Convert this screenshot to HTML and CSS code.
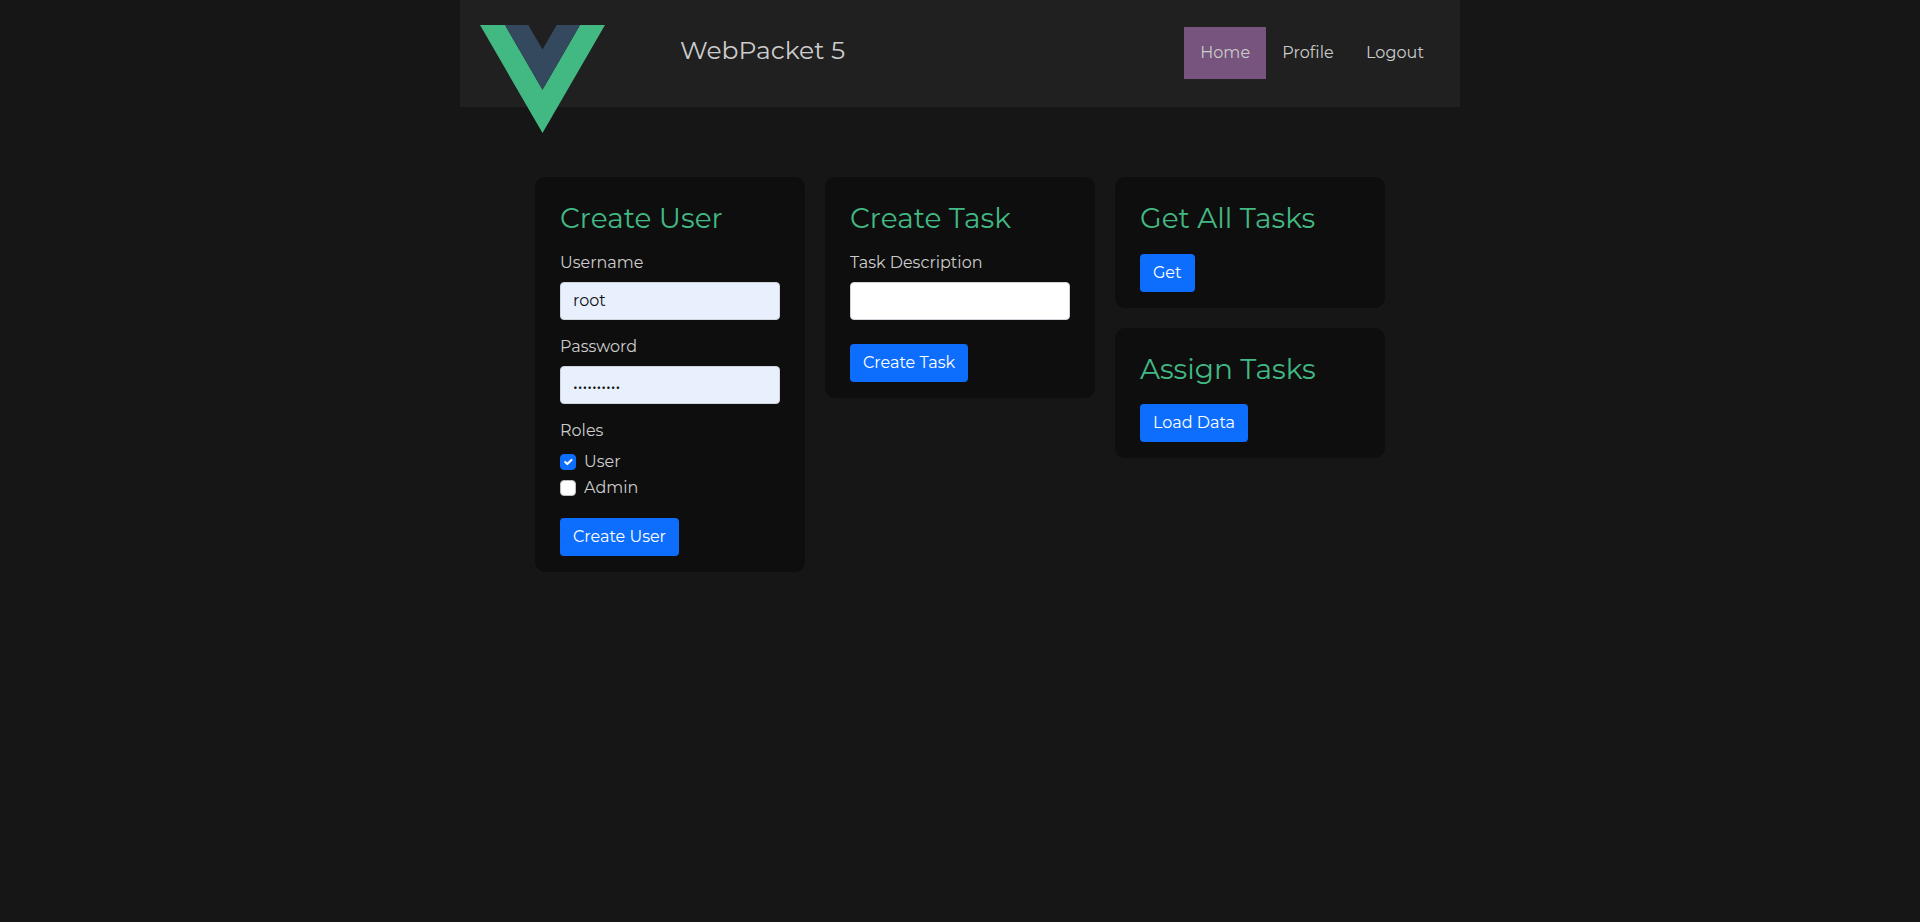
FILE: index.html
```html
<!DOCTYPE html>
<html lang="en">
<head>
<meta charset="utf-8">
<title>WebPacket 5</title>
<link rel="stylesheet" href="styles.css">
</head>
<body>
<header class="header">
  <svg class="logo" viewBox="0 0 125 108" aria-hidden="true">
    <path fill="#42b883" d="M0 0H25L62.5 64.8L100 0H125L62.5 108Z"/>
    <path fill="#35495e" d="M25 0H48.3L62.5 24.5L76.7 0H100L62.5 64.8Z"/>
  </svg>
  <div class="brand">WebPacket 5</div>
  <nav class="nav">
    <a class="nav-link active">Home</a>
    <a class="nav-link">Profile</a>
    <a class="nav-link">Logout</a>
  </nav>
</header>
<main class="board">
  <section class="card">
    <h3 class="title">Create User</h3>
    <form class="form">
      <label class="label" for="username">Username</label>
      <input class="input filled" id="username" type="text" value="root">
      <label class="label" for="password">Password</label>
      <input class="input filled password" id="password" type="password" value="0123456789">
      <div class="label">Roles</div>
      <div class="check"><span class="box checked"><svg viewBox="0 0 20 20"><path d="M6 10l3 3l6-6"/></svg></span>User</div>
      <div class="check"><span class="box"></span>Admin</div>
      <button class="btn user-btn" type="button">Create User</button>
    </form>
  </section>
  <section class="card">
    <h3 class="title">Create Task</h3>
    <form class="form">
      <label class="label" for="task">Task Description</label>
      <input class="input" id="task" type="text">
      <button class="btn task-btn" type="button">Create Task</button>
    </form>
  </section>
  <div class="stack">
    <section class="card">
      <h3 class="title">Get All Tasks</h3>
      <button class="btn" type="button">Get</button>
    </section>
    <section class="card">
      <h3 class="title">Assign Tasks</h3>
      <button class="btn" type="button">Load Data</button>
    </section>
  </div>
</main>
</body>
</html>
```
FILE: styles.css
```css
* { box-sizing: border-box; }
body {
  margin: 0;
  background: #161616;
  color: #ccc;
  font: 400 16px/24px Montserrat, Inter, sans-serif;
}
.header {
  display: flex;
  width: 1000px;
  height: 107px;
  margin: 0 auto;
  padding: 0 20px;
  background: #202020;
}
.logo { width: 125px; height: 108px; margin-top: 25px; flex: none; }
.brand { margin: 32px 0 0 75px; font-size: 25px; line-height: 37px; }
.nav { display: flex; margin: 27px 0 0 auto; height: 52px; }
.nav-link { padding: 14px 16px 12px; letter-spacing: 0.09px; }
.nav-link.active { background: #76547d; }
.board {
  display: flex;
  align-items: flex-start;
  gap: 20px;
  width: 850px;
  margin: 70px auto 0;
}
.card { width: 270px; padding: 25px 25px 16px; border-radius: 10px; background: #0e0e0e; }
.stack { display: flex; flex-direction: column; gap: 20px; }
.title { margin: 0 0 18px; font-size: 28px; line-height: 33.6px; font-weight: 400; color: #42b883; }
.form { display: flex; flex-direction: column; align-items: flex-start; margin-top: -3.6px; }
.label { display: block; padding-top: 1px; margin-bottom: 7px; }
.input {
  width: 220px;
  height: 38px;
  margin-bottom: 14px;
  padding: 5px 12px 7px;
  border: 1px solid #ced4da;
  border-radius: 4px;
  background: #fff;
  color: #111;
  font: inherit;
}
.filled { background: #e8f0fe; }
.password { padding: 7px 12px 5px; }
.check { display: flex; align-items: center; gap: 8px; height: 24px; margin-bottom: 2px; }
.box { width: 16px; height: 16px; border: 1px solid #bbb; border-radius: 4px; background: #fff; }
.box.checked { border-color: #0d6efd; background: #0d6efd; }
.box svg { display: block; width: 14px; height: 14px; fill: none; stroke: #fff; stroke-width: 3; stroke-linecap: round; stroke-linejoin: round; }
.btn {
  display: block;
  height: 38px;
  padding: 6px 13px;
  border: 0;
  border-radius: 4px;
  background: #0d6efd;
  color: #fff;
  font: inherit;
}
.user-btn { margin-top: 16px; }
.task-btn { margin-top: 10px; }
```
